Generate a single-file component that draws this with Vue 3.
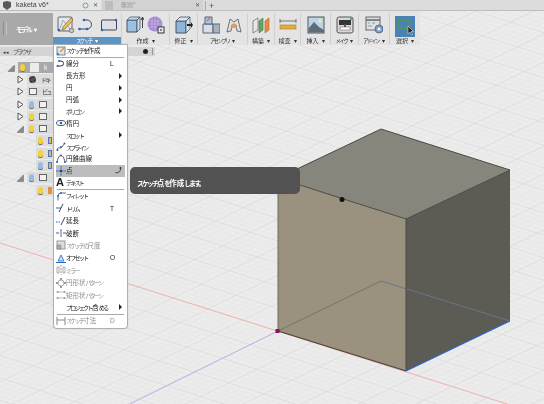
<script setup>
const icons = {
  newSketch: '<rect x="1" y="1" width="14" height="14" rx="1" fill="#e4e8ee" stroke="#666"/><path d="M3 12 6 4 13 13" fill="none" stroke="#9ab"/><path d="M6 11 14 2l2 2-8 9-3 1z" fill="#eec35a" stroke="#85601a" stroke-width=".7"/><circle cx="2" cy="14" r="1.3" fill="#2a62c0"/><circle cx="14.5" cy="14.5" r="2.2" fill="#ccc" stroke="#555" stroke-width=".7"/>',
  line: '<path d="M1 13h8a4 4 0 0 0 0-9H6" fill="none" stroke="#445" stroke-width="1"/><circle cx="1.5" cy="13" r="1.3" fill="#2262cc"/><circle cx="9" cy="13" r="1.3" fill="#2262cc"/><circle cx="6" cy="4" r="1.3" fill="#2262cc"/>',
  rect: '<rect x="1.5" y="4" width="15" height="10" rx="1" fill="#dde0e4" stroke="#445"/><circle cx="2" cy="14" r="1.2" fill="#2262cc"/><circle cx="16" cy="4" r="1.2" fill="#2262cc"/>',
  box: '<path d="M1 4h10v12H1z" fill="#9cc0e0" stroke="#456"/><path d="M1 4l3-3h10l-3 3zM11 4l3-3v12l-3 3z" fill="#c8dcee" stroke="#456" stroke-width=".8"/><path d="M16.5 12V2M15 4l1.5-3L18 4" fill="none" stroke="#333" stroke-width=".9"/>',
  sphere: '<circle cx="8" cy="8" r="7.5" fill="#a184cf"/><path d="M1 5h14M1 8h14M1 11h14M5 1v14M8 1v14M11 1v14" stroke="#d7c8ee" stroke-width=".6"/><rect x="11" y="11" width="6" height="6" fill="#eee" stroke="#333"/><path d="M13 14h2" stroke="#111"/>',
  modify: '<path d="M1 5h10v12H1z" fill="#8fb6da" stroke="#456"/><path d="M1 5l4-4h10l-4 4zM11 5l4-4v12l-4 4z" fill="#d8e4ee" stroke="#456" stroke-width=".8"/><path d="M12 8h4v-2l2 3-2 3v-2h-4z" fill="#222"/>',
  assembly: '<path d="M1 8h10v9H1z" fill="#d8dee4" stroke="#567"/><path d="M11 8h7v9h-7z" fill="#a8b2bc" stroke="#567"/><path d="M3 1h7v7H3z" fill="#a9c6e4" stroke="#567"/><path d="M5 5 8 2" stroke="#d66" stroke-width="1.2"/>',
  joint: '<path d="M2 16 5 3l4 3 4-3 3 13-4-1-1-6-2-1-2 1-1 6z" fill="#dde0e4" stroke="#555" stroke-width=".8"/><path d="M7 8h4l1 4H6z" fill="#e99a50"/>',
  plane: '<path d="M1 5l5-3v12l-5 3z" fill="#e6e6e6" stroke="#666" stroke-width=".7"/><path d="M7 5l4-3v12l-4 3z" fill="#67a55f" stroke="#475" stroke-width=".6"/><path d="M13 5l4-3v12l-4 3z" fill="#e88b43" stroke="#a63" stroke-width=".6"/>',
  measure: '<path d="M1 5h16M1 3v4M17 3v4" stroke="#555" stroke-width=".8" fill="none"/><rect x="1" y="9" width="16" height="4" fill="#e5ab3b" stroke="#a77a20" stroke-width=".6"/>',
  image: '<rect x="1" y="1" width="16" height="16" fill="#bcd4e8" stroke="#555"/><circle cx="13" cy="5" r="1.8" fill="#f4ec9c"/><path d="M1.5 16.5v-4L7 6l5 5 5 3v2.500z" fill="#5f6d78"/>',
  make: '<rect x="1" y="1" width="16" height="16" rx="2" fill="#d9d9d9" stroke="#555"/><rect x="3" y="4" width="12" height="5" fill="#333"/><rect x="4" y="11" width="10" height="3" fill="#fff" stroke="#555" stroke-width=".5"/><rect x="8" y="8" width="2" height="3" fill="#555"/><rect x="14" y="2" width="2" height="2" fill="#4caf50"/>',
  addin: '<rect x="1" y="1" width="14" height="13" fill="#dde0e4" stroke="#666"/><path d="M1 4h14" stroke="#666" stroke-width="1.500"/><path d="M3 7h2M7 7h3M3 10h4" stroke="#888" stroke-width=".8"/><circle cx="14" cy="13" r="4" fill="#7b9fcc" stroke="#456" stroke-width=".7"/><circle cx="14" cy="13" r="1.5" fill="#fff"/>',
  select: '<rect x="2" y="2" width="11" height="8" fill="none" stroke="#4d9a52" stroke-width="1.400"/><path d="M12 8v8l2-2 1.500 3 1-.5-1.500-3h2.500z" fill="#222" stroke="#eee" stroke-width=".5"/>',
  mNew: '<rect x="1" y="1" width="8" height="8" fill="#dfe6ee" stroke="#567" stroke-width=".8"/><path d="M4 6 9 1" stroke="#d59c2b" stroke-width="1.400"/><circle cx="2" cy="8" r="1" fill="#26c"/>',
  mLine: '<path d="M1 7h4a2.500 2.500 0 0 0 0-5H3" fill="none" stroke="#334"/><circle cx="1.500" cy="7" r="1" fill="#26c"/><circle cx="3" cy="2" r="1" fill="#26c"/>',
  mEllipse: '<ellipse cx="5" cy="5" rx="4.500" ry="2.500" fill="none" stroke="#456"/><circle cx="5" cy="5" r="1.300" fill="#26c"/>',
  mSpline: '<path d="M1 8c2-5 3 0 5-3s2-3 3-4" fill="none" stroke="#334" stroke-width=".8"/><circle cx="1.500" cy="8" r="1" fill="#26c"/><circle cx="5" cy="5" r="1" fill="#26c"/><circle cx="8.500" cy="1.500" r="1" fill="#26c"/>',
  mConic: '<path d="M1 8.500C2 3 3.500 1.500 5 1.500S8 3 9 8.500" fill="none" stroke="#334" stroke-width=".8"/><circle cx="1" cy="8" r="1" fill="#26c"/><circle cx="9" cy="8" r="1" fill="#26c"/><circle cx="5" cy="1.500" r="1" fill="#26c"/>',
  mPoint: '<path d="M5 0v10M0 5h10" stroke="#4a78b4"/><circle cx="5" cy="5" r="1" fill="#223"/>',
  mFillet: '<path d="M2 9.500V5a3 3 0 0 1 3-3h5" fill="none" stroke="#445" stroke-width=".8"/><circle cx="2" cy="5" r=".9" fill="#26c"/><circle cx="5" cy="2" r=".9" fill="#26c"/>',
  mTrim: '<path d="M0 5h5" stroke="#26c"/><path d="M3 9 7 1" stroke="#445"/>',
  mExtend: '<path d="M0 6h4" stroke="#26c" stroke-dasharray="1.500 1"/><path d="M5 9 9 1" stroke="#445"/>',
  mBreak: '<path d="M0 5h3M7 5h3" stroke="#26c"/><path d="M5 1v8" stroke="#667"/>',
  mScale: '<rect x="1" y="1" width="8" height="8" fill="#ddd" stroke="#999"/><rect x="1" y="5" width="4" height="4" fill="#aaa" stroke="#888" stroke-width=".6"/>',
  mOffset: '<path d="M2 8 5 2l3 6z" fill="#cfdcec" stroke="#26c" stroke-width=".8"/><path d="M0 9.500h10" stroke="#26c"/>',
  mMirror: '<path d="M5 0v10" stroke="#999" stroke-dasharray="2 1"/><path d="M1 2h2v6H1zM7 2h2v6H7z" fill="none" stroke="#999" stroke-width=".8"/>',
  mCircular: '<circle cx="5" cy="5" r="3" fill="none" stroke="#aaa"/><rect x="4" y="0" width="2" height="2" fill="#999"/><rect x="4" y="8" width="2" height="2" fill="#999"/><rect x="0" y="4" width="2" height="2" fill="#999"/><rect x="8" y="4" width="2" height="2" fill="#999"/>',
  mRect: '<path d="M1 2h8M1 8h8" stroke="#aaa" stroke-width=".8"/><g fill="#999"><circle cx="1.500" cy="2" r="1"/><circle cx="8.500" cy="2" r="1"/><circle cx="1.500" cy="8" r="1"/><circle cx="8.500" cy="8" r="1"/></g>',
  mDim: '<path d="M1 1v8M9 1v8M1 4h8" fill="none" stroke="#888"/>'
}

const groups = [
  { label: 'スケッチ', width: 69, active: true, icons: ['newSketch', 'line', 'rect'] },
  { label: '作成', width: 48, icons: ['box', 'sphere'] },
  { label: '修正', width: 28, icons: ['modify'] },
  { label: 'アセンブリ', width: 50, icons: ['assembly', 'joint'] },
  { label: '構築', width: 27, icons: ['plane'] },
  { label: '検査', width: 26, icons: ['measure'] },
  { label: '挿入', width: 30, icons: ['image'] },
  { label: 'メイク', width: 28, icons: ['make'] },
  { label: 'アドイン', width: 31, icons: ['addin'] },
  { label: '選択', width: 30, selected: true, icons: ['select'] }
]

const tree = [
  { level: 0, open: true, bulb: '#f4d23c', kind: 'box', text: 'k' },
  { level: 1, kind: 'gear', text: 'ドキ' },
  { level: 1, kind: 'folder', text: 'ビュ' },
  { level: 1, bulb: '#9bbce0', kind: 'folder', text: '' },
  { level: 1, bulb: '#f4d23c', kind: 'folder', text: '' },
  { level: 1, open: true, bulb: '#f4d23c', kind: 'folder', text: '' },
  { level: 2, bulb: '#f4d23c', kind: 'sketch', text: '' },
  { level: 2, bulb: '#f4d23c', kind: 'sketch', text: '' },
  { level: 2, bulb: '#9bbce0', kind: 'sketch', text: '' },
  { level: 1, open: true, bulb: '#9bbce0', kind: 'folder', text: '' },
  { level: 2, bulb: '#f4d23c', kind: 'plane', text: '' }
]

const menu = [
  { text: 'スケッチを作成', icon: 'mNew', sepAfter: true },
  { text: '線分', icon: 'mLine', key: 'L' },
  { text: '長方形', more: true },
  { text: '円', more: true },
  { text: '円弧', more: true },
  { text: 'ポリゴン', more: true },
  { text: '楕円', icon: 'mEllipse' },
  { text: 'スロット', more: true },
  { text: 'スプライン', icon: 'mSpline' },
  { text: '円錐曲線', icon: 'mConic' },
  { text: '点', icon: 'mPoint', hot: true },
  { text: 'テキスト', glyph: 'A', sepAfter: true },
  { text: 'フィレット', icon: 'mFillet', tall: true },
  { text: 'トリム', icon: 'mTrim', key: 'T', tall: true },
  { text: '延長', icon: 'mExtend', tall: true },
  { text: '破断', icon: 'mBreak', tall: true },
  { text: 'スケッチの尺度', icon: 'mScale', off: true, tall: true },
  { text: 'オフセット', icon: 'mOffset', key: 'O', tall: true },
  { text: 'ミラー', icon: 'mMirror', off: true, tall: true },
  { text: '円形状パターン', icon: 'mCircular', off: true, tall: true },
  { text: '矩形状パターン', icon: 'mRect', off: true, tall: true },
  { text: 'プロジェクト/含める', more: true, sepAfter: true, tall: true },
  { text: 'スケッチ寸法', icon: 'mDim', key: 'D', off: true, tall: true }
]

// the app's UI font has narrow kana next to wide kanji, so kana runs get their own class
const runs = (text) =>
  (text.match(/[\u30a0-\u30ff\u3040-\u309f。/]+|[^\u30a0-\u30ff\u3040-\u309f。/]+/g) || []).map((t) => ({
    t,
    kana: /[\u30a0-\u30ff\u3040-\u309f。/]/.test(t)
  }))

// the floor grid, both families anchored on the origin of the model
const gridLines = []
for (let i = -110; i < 130; i++) {
  const major = i % 5 === 0
  const a = 331 + i * 4.5
  gridLines.push({ x1: 0, y1: a - 278 * 0.317, x2: 544, y2: a + 266 * 0.317, major })
  const b = 331 + i * 5.6
  gridLines.push({ x1: 0, y1: b + 278 * 0.485, x2: 544, y2: b - 266 * 0.485, major })
}
</script>

<template>
  <div class="app">
    <svg class="scene" width="544" height="404" viewBox="0 0 544 404">
      <line
        v-for="(l, i) in gridLines"
        :key="i"
        :x1="l.x1" :y1="l.y1" :x2="l.x2" :y2="l.y2"
        :stroke="l.major ? '#d8d8d8' : '#e6e6e6'"
        stroke-width="0.7"
      />
      <path d="M0 243 510 405" stroke="#f2b4b0" stroke-width="1" />
      <path d="M278 331 130 404" stroke="#b4b4ee" stroke-width="1" />
      <polygon points="381,129 510,170 406,219 278,178" fill="#87867c" />
      <polygon points="278,178 406,219 406,371 278,331" fill="#9a917e" />
      <polygon points="406,219 510,170 510,321 406,371" fill="#5c5b54" />
      <path d="M278 331 381 281" stroke="#79735f" fill="none" />
      <path d="M381 281 510 321" stroke="#6e7390" fill="none" />
      <path d="M381 129 510 170 406 219 278 178zM406 219V371" stroke="#4b4a43" fill="none" />
      <path d="M278 331 406 371" stroke="#47443b" stroke-width="1.200" />
      <path d="M278 178V331" stroke="#6d6a5f" />
      <path d="M406 371 510 321" stroke="#2f66d0" stroke-width="1.200" />
      <circle cx="342" cy="199.500" r="2.500" fill="#111" />
      <rect x="275.500" y="329" width="4" height="4" fill="#8c0d62" />
    </svg>

    <header class="tabs">
      <div class="tab current">
        <svg class="tab-icon" width="10" height="9" viewBox="0 0 10 9">
          <path d="M1 1 5 0l4 1v5L5 9 1 6z" fill="#5a5a5a" />
        </svg>
        <span class="tab-name">kaketa v6*</span>
        <svg width="7" height="7" viewBox="0 0 7 7"><circle cx="3.500" cy="3.500" r="2.500" fill="none" stroke="#5bb08e" /></svg>
        <span class="tab-x">✕</span>
      </div>
      <div class="tab">
        <svg class="tab-icon" width="10" height="9" viewBox="0 0 10 9">
          <path d="M1 0h8v9H1z" fill="#bdbdbd" />
        </svg>
        <span class="tab-name dim">無題*</span>
        <span class="tab-x">✕</span>
      </div>
      <span class="tab-plus">+</span>
    </header>

    <nav class="toolbar">
      <div class="mode">
        <i class="grip"></i>
        <span class="kana">モデル</span><span class="arrow">▾</span>
      </div>
      <div
        v-for="g in groups"
        :key="g.label"
        class="group"
        :class="{ active: g.active, selected: g.selected }"
        :style="{ width: g.width + 'px' }"
      >
        <div class="group-icons">
          <svg v-for="n in g.icons" :key="n" width="18" height="18" viewBox="0 0 18 18" v-html="icons[n]"></svg>
        </div>
        <div class="group-label">
          <span v-for="(r, i) in runs(g.label)" :key="i" :class="{ kana: r.kana }">{{ r.t }}</span>
          <span class="arrow">▾</span>
        </div>
      </div>
    </nav>

    <aside class="browser">
      <div class="browser-head">
        <span class="collapse">◂◂</span>
        <span class="browser-title kana">ブラウザ</span>
        <i class="pin"></i>
        <i class="head-grip"></i>
      </div>
      <ul class="tree">
        <li v-for="(row, i) in tree" :key="i" class="tree-row" :class="'level' + row.level">
          <svg v-if="row.level < 2" class="twist" width="7" height="9" viewBox="0 0 7 9">
            <path v-if="row.open" d="M6.500 2v6.500H0z" fill="#8a8a8a" stroke="#666" stroke-width=".5" />
            <path v-else d="M1 1 6 4.500 1 8z" fill="#fff" stroke="#555" />
          </svg>
          <span v-else class="twist-space"></span>
          <div class="row-body">
            <i v-if="row.bulb" class="bulb" :style="{ background: row.bulb }"></i>
            <i class="node" :class="row.kind"></i>
            <span v-if="row.text" class="row-text kana">{{ row.text }}</span>
          </div>
        </li>
      </ul>
    </aside>

    <div class="menu">
      <template v-for="item in menu" :key="item.text">
        <div class="menu-row" :class="{ hot: item.hot, off: item.off, tall: item.tall }">
          <span class="menu-icon">
            <svg v-if="item.icon" width="10" height="10" viewBox="0 0 10 10" v-html="icons[item.icon]"></svg>
            <b v-else-if="item.glyph" class="glyph">{{ item.glyph }}</b>
          </span>
          <span class="menu-text">
            <span v-for="(r, i) in runs(item.text)" :key="i" :class="{ kana: r.kana }">{{ r.t }}</span>
          </span>
          <span v-if="item.key" class="menu-key">{{ item.key }}</span>
          <i v-if="item.more" class="menu-more"></i>
          <svg v-if="item.hot" class="hook" width="7" height="7" viewBox="0 0 7 7">
            <path d="M0.500 5.500c3 1 5-1 5-4" fill="none" stroke="#333" />
            <circle cx="5.500" cy="1" r="1" fill="#333" />
          </svg>
        </div>
        <hr v-if="item.sepAfter" class="menu-sep" />
      </template>
    </div>

    <div class="tooltip">
      <span v-for="(r, i) in runs('スケッチ点を作成します。')" :key="i" :class="{ kana: r.kana }">{{ r.t }}</span>
    </div>
  </div>
</template>

<style scoped>
.app {
  position: relative;
  width: 544px;
  height: 404px;
  overflow: hidden;
  background: #ececec;
  font-family: "Noto Sans CJK JP", "Noto Sans", sans-serif;
  filter: blur(0.3px);
}

.scene {
  position: absolute;
  left: 0;
  top: 0;
}

.kana {
  font-size: 0.92em;
  letter-spacing: -0.28em;
}

.arrow {
  margin-left: 3px;
  font-size: 6px;
}

.tabs {
  position: relative;
  display: flex;
  align-items: center;
  height: 10px;
  background: #dcdcdc;
  border-bottom: 1px solid #bdbdbd;
  font-size: 7px;
  line-height: 10px;
}

.tab {
  display: flex;
  align-items: center;
  gap: 4px;
  width: 101px;
  height: 10px;
  padding: 0 3px 0 2px;
  box-sizing: border-box;
  margin-right: 1px;
  background: #d2d2d2;
  color: #777;
}

.tab.current {
  background: #e6e6e6;
  color: #444;
}

.tab-name {
  flex: 1;
  font-family: "Liberation Sans", sans-serif;
}

.tab-name.dim {
  padding-left: 3px;
  font-family: inherit;
  font-size: 6px;
  color: #999;
}

.tab-x {
  font-size: 6px;
  color: #555;
}

.tab-plus {
  margin-left: 1px;
  padding-left: 3px;
  border-left: 1px solid #aaa;
  font-size: 9px;
  line-height: 9px;
  color: #555;
}

.toolbar {
  position: relative;
  display: flex;
  width: 420px;
  height: 34px;
  padding-top: 2px;
  box-sizing: border-box;
  background: #e4e4e4;
}

.mode {
  position: relative;
  display: flex;
  align-items: center;
  justify-content: center;
  width: 53px;
  height: 32px;
  background: #a9a9a9;
  color: #fff;
  font-size: 7.500px;
  font-weight: 700;
}

.grip {
  position: absolute;
  left: 3px;
  top: 9px;
  width: 2px;
  height: 13px;
  border-left: 1px solid #8e8e8e;
  border-right: 1px solid #c2c2c2;
}

.group {
  display: flex;
  flex-direction: column;
  box-sizing: border-box;
  height: 32px;
  border-right: 1px solid #d0d0d0;
}

.group-icons {
  flex: 1;
  display: flex;
  align-items: center;
  justify-content: space-evenly;
}

.group-label {
  height: 8px;
  line-height: 8px;
  text-align: center;
  font-size: 6px;
  color: #333;
  white-space: nowrap;
}

.group.active .group-label {
  background: #5b94c6;
  color: #fff;
}

.group.selected {
  border-right: 0;
}

.group.selected .group-icons {
  margin: 3px 5px 0;
  background: #4a82b4;
}

.browser {
  position: absolute;
  left: 0;
  top: 47px;
  width: 155px;
}

.browser-head {
  display: flex;
  align-items: center;
  height: 9px;
  padding: 0 1px 0 3px;
  background: #d4d4d4;
  font-size: 6.500px;
  color: #555;
}

.collapse {
  width: 10px;
  font-size: 5px;
  color: #333;
}

.browser-title {
  flex: 1;
}

.pin {
  width: 5px;
  height: 5px;
  margin-right: 4px;
  border-radius: 50%;
  background: #222;
}

.head-grip {
  width: 1px;
  height: 7px;
  border-left: 1px solid #999;
}

.tree {
  list-style: none;
  width: 54px;
  margin: 5px 0 0;
  padding: 0;
  overflow: hidden;
}

.tree-row {
  display: flex;
  align-items: center;
  height: 12.300px;
  font-size: 6.500px;
  color: #333;
}

.tree-row.level0 {
  padding-left: 8px;
}

.tree-row.level1 {
  padding-left: 17px;
}

.tree-row.level2 {
  padding-left: 26px;
}

.twist {
  flex: none;
  margin-right: 3px;
}

.twist-space {
  flex: none;
  width: 10px;
}

.row-body {
  flex: 1;
  min-width: 0;
  display: flex;
  align-items: center;
  gap: 5px;
  height: 11px;
  padding-left: 2px;
  background: #dcdcdc;
  overflow: hidden;
}

.level0 .row-body {
  background: #a9a9a9;
  color: #fff;
}

.row-text {
  white-space: nowrap;
}

.bulb {
  flex: none;
  width: 5px;
  height: 7px;
  border-radius: 50% 50% 40% 40%;
  box-shadow: 0 1px 0 #777;
}

.node {
  flex: none;
  width: 8px;
  height: 7px;
  box-sizing: border-box;
  border: 1px solid #666;
  background: #f0f0f0;
}

.node.box {
  width: 9px;
  height: 9px;
  border: 0;
  background: #ececec;
}

.node.gear {
  width: 7px;
  height: 7px;
  border: 2px dotted #333;
  border-radius: 50%;
  background: #555;
}

.node.sketch {
  width: 4px;
  border-color: #4a78b4;
  background: #e8b060;
}

.node.plane {
  width: 4px;
  border: 0;
  background: #e89040;
}

.menu {
  position: absolute;
  left: 54px;
  top: 45px;
  width: 73px;
  height: 283px;
  box-sizing: border-box;
  padding: 0 2px;
  background: #fff;
  border-radius: 0 0 3px 3px;
  box-shadow: 0 0 1px 1px #aaa;
  font-size: 6.500px;
}

.menu-row {
  display: flex;
  align-items: center;
  height: 11.900px;
  line-height: 11px;
  color: #222;
}

.menu-row.tall {
  height: 12.400px;
}

.menu-row.hot {
  background: #bdbdbd;
}

.menu-row.off {
  color: #8c8c8c;
}

.menu-icon {
  flex: none;
  display: flex;
  align-items: center;
  width: 10px;
}

.glyph {
  font-family: "Liberation Sans", sans-serif;
  font-size: 11px;
  color: #222;
}

.menu-text {
  flex: 1;
  white-space: nowrap;
}

.menu-key {
  width: 15px;
  font-family: "Liberation Sans", sans-serif;
  font-size: 6.500px;
}

.menu-more {
  width: 0;
  height: 0;
  margin-right: 3px;
  border-style: solid;
  border-width: 3px 0 3px 3px;
  border-color: transparent transparent transparent #222;
}

.hook {
  margin-right: 3px;
}

.menu-sep {
  height: 1px;
  margin: 0 1px;
  border: 0;
  background: #aaa;
}

.tooltip {
  position: absolute;
  left: 130px;
  top: 167px;
  width: 170px;
  height: 27px;
  box-sizing: border-box;
  padding: 2px 0 0 7px;
  line-height: 27px;
  background: #525252;
  border-radius: 5px;
  color: #fff;
  font-size: 7.500px;
  font-weight: 700;
  white-space: nowrap;
}
</style>
